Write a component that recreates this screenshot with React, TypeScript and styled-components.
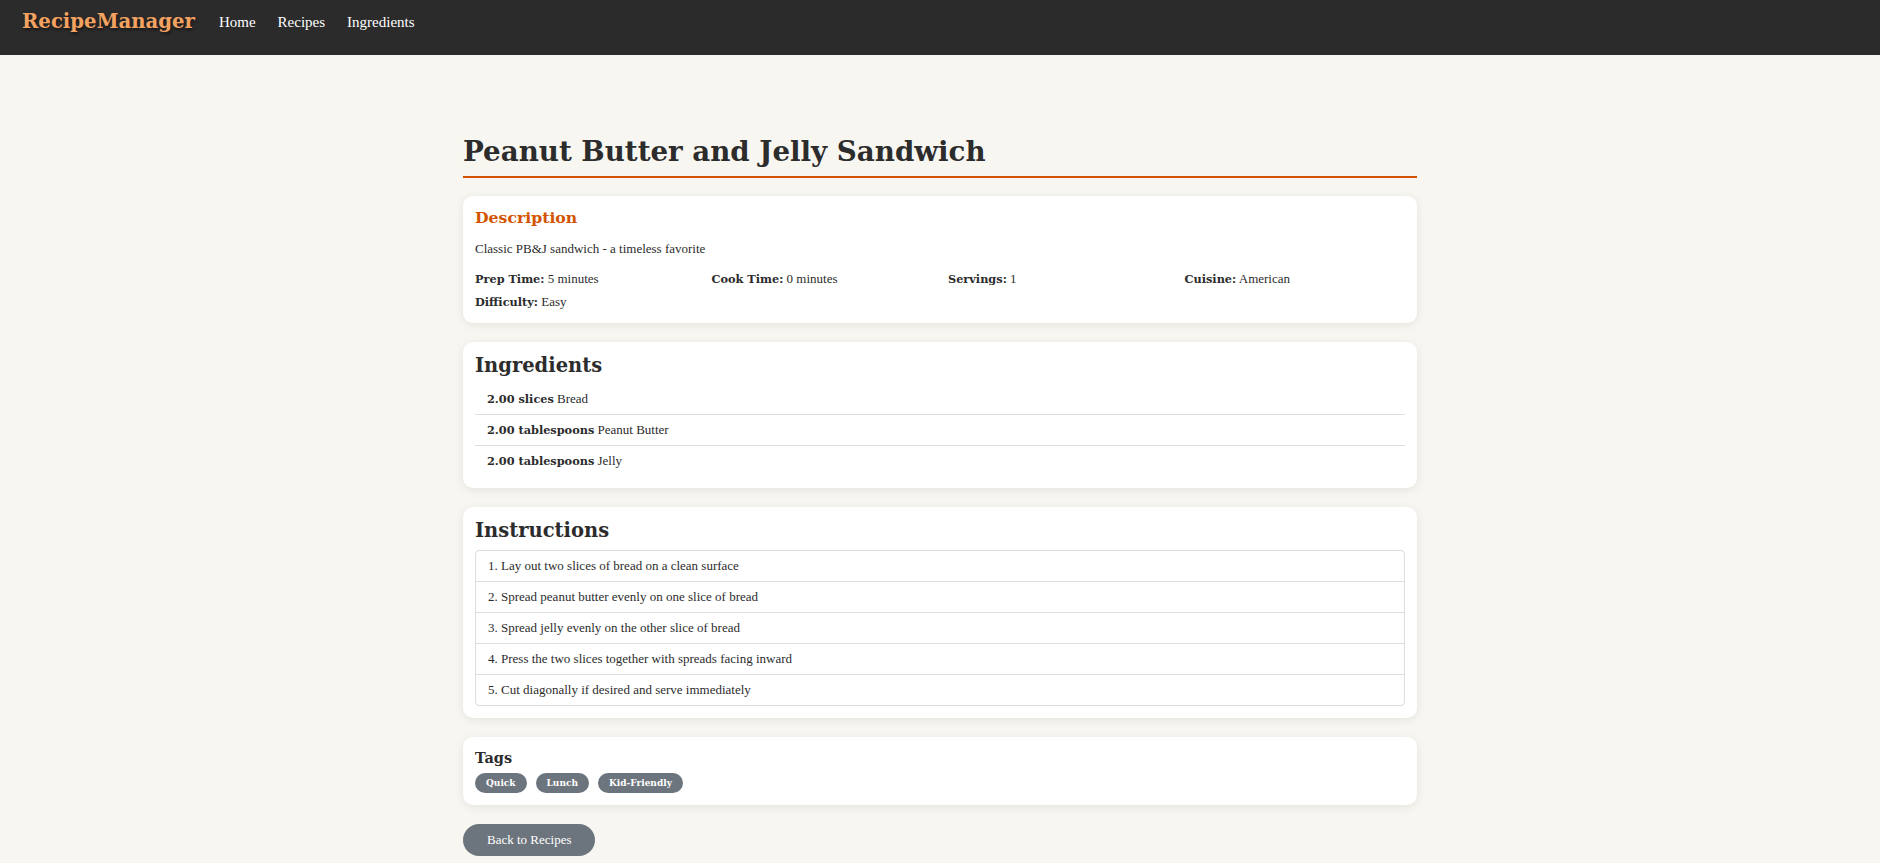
import React from "react";
import styled, { createGlobalStyle } from "styled-components";

const GlobalStyle = createGlobalStyle`
  html, body { margin: 0; padding: 0; }
  body {
    background: #f8f6f1;
    color: #2c2c2c;
    font-family: "Liberation Serif", "DejaVu Serif", serif;
  }
  * { box-sizing: border-box; }
`;

const headingFont = `"DejaVu Serif", "Liberation Serif", serif`;

const Nav = styled.nav`
  height: 55px;
  background: #2b2b2b;
  display: flex;
  align-items: flex-start;
  padding: 10px 22px 0;
  gap: 24px;
`;

const Logo = styled.a`
  font-family: ${headingFont};
  font-size: 19.7px;
  line-height: 24px;
  font-weight: bold;
  color: #f4a261;
  text-decoration: none;
  text-shadow: 1px 2px 3px rgba(0, 0, 0, 0.5);
`;

const NavLinks = styled.div`
  display: flex;
  gap: 22px;
  margin-top: 3px;
`;

const NavLink = styled.a`
  font-size: 15px;
  line-height: 18px;
  color: #ffffff;
  text-decoration: none;
`;

const Main = styled.main`
  width: 954px;
  margin: 0 auto;
  padding-top: 79px;
`;

const Title = styled.h1`
  font-family: ${headingFont};
  font-size: 27.7px;
  line-height: 36px;
  font-weight: bold;
  margin: 0 0 18px;
  padding-bottom: 6px;
  border-bottom: 2px solid #d35400;
  color: #2c2c2c;
`;

const Card = styled.section`
  background: #ffffff;
  border-radius: 10px;
  padding: 12px;
  margin-bottom: 19px;
  box-shadow: 0 2px 10px rgba(0, 0, 0, 0.08);
`;

const SubHeading = styled.h3`
  font-family: ${headingFont};
  font-size: 15.7px;
  line-height: 20px;
  font-weight: bold;
  color: #d35400;
  margin: 0 0 12px;
`;

const Text = styled.p`
  font-size: 13px;
  line-height: 18px;
  margin: 0 0 12px;
`;

const Label = styled.strong`
  font-family: ${headingFont};
  font-size: 11.3px;
  line-height: 1;
  font-weight: bold;
`;

const MetaGrid = styled.div`
  display: grid;
  grid-template-columns: repeat(auto-fit, minmax(200px, 1fr));
  gap: 5px 16px;
`;

const MetaItem = styled.div`
  font-size: 13px;
  line-height: 18px;
`;

const SectionTitle = styled.h2<{ $mb: number }>`
  font-family: ${headingFont};
  font-size: 19.5px;
  line-height: 24px;
  font-weight: bold;
  margin: 0 0 ${(p) => p.$mb}px;
  color: #2c2c2c;
`;

const IngredientList = styled.ul`
  list-style: none;
  margin: 0;
  padding: 0;
`;

const IngredientRow = styled.li`
  font-size: 13px;
  line-height: 18px;
  padding: 6px 12px;
  border-bottom: 1px solid #dedede;
  &:last-child { border-bottom: none; }
`;

const StepList = styled.ol`
  list-style: none;
  margin: 0;
  padding: 0;
  border: 1px solid #dedede;
  border-radius: 4px;
`;

const StepRow = styled.li`
  font-size: 13px;
  line-height: 18px;
  padding: 6px 12px;
  border-bottom: 1px solid #dedede;
  &:last-child { border-bottom: none; }
`;

const TagsTitle = styled.h4`
  font-family: ${headingFont};
  font-size: 14.5px;
  line-height: 18px;
  font-weight: bold;
  margin: 0 0 6px;
`;

const TagRow = styled.div`
  display: flex;
  gap: 9px;
`;

const Tag = styled.span`
  font-family: ${headingFont};
  background: #6c757d;
  color: #ffffff;
  font-size: 9px;
  font-weight: bold;
  line-height: 14px;
  padding: 3px 11px;
  border-radius: 12px;
`;

const BackButton = styled.button`
  background: #6c757d;
  color: #ffffff;
  border: none;
  border-radius: 16px;
  font-family: inherit;
  font-size: 13px;
  line-height: 18px;
  padding: 7px 24px;
  cursor: pointer;
`;

const meta: [string, string][] = [
  ["Prep Time:", "5 minutes"],
  ["Cook Time:", "0 minutes"],
  ["Servings:", "1"],
  ["Cuisine:", "American"],
  ["Difficulty:", "Easy"],
];

const ingredients: [string, string][] = [
  ["2.00 slices", "Bread"],
  ["2.00 tablespoons", "Peanut Butter"],
  ["2.00 tablespoons", "Jelly"],
];

const steps = [
  "Lay out two slices of bread on a clean surface",
  "Spread peanut butter evenly on one slice of bread",
  "Spread jelly evenly on the other slice of bread",
  "Press the two slices together with spreads facing inward",
  "Cut diagonally if desired and serve immediately",
];

const tags = ["Quick", "Lunch", "Kid-Friendly"];

export default function App() {
  return (
    <>
      <GlobalStyle />
      <Nav>
        <Logo href="#">RecipeManager</Logo>
        <NavLinks>
          <NavLink href="#">Home</NavLink>
          <NavLink href="#">Recipes</NavLink>
          <NavLink href="#">Ingredients</NavLink>
        </NavLinks>
      </Nav>
      <Main>
        <Title>Peanut Butter and Jelly Sandwich</Title>
        <Card>
          <SubHeading>Description</SubHeading>
          <Text>Classic PB&amp;J sandwich - a timeless favorite</Text>
          <MetaGrid>
            {meta.map(([k, v]) => (
              <MetaItem key={k}>
                <Label>{k}</Label> {v}
              </MetaItem>
            ))}
          </MetaGrid>
        </Card>
        <Card>
          <SectionTitle $mb={6}>Ingredients</SectionTitle>
          <IngredientList>
            {ingredients.map(([q, n]) => (
              <IngredientRow key={q + n}>
                <Label>{q}</Label> {n}
              </IngredientRow>
            ))}
          </IngredientList>
        </Card>
        <Card>
          <SectionTitle $mb={7}>Instructions</SectionTitle>
          <StepList>
            {steps.map((s, i) => (
              <StepRow key={i}>
                {i + 1}. {s}
              </StepRow>
            ))}
          </StepList>
        </Card>
        <Card>
          <TagsTitle>Tags</TagsTitle>
          <TagRow>
            {tags.map((t) => (
              <Tag key={t}>{t}</Tag>
            ))}
          </TagRow>
        </Card>
        <BackButton>Back to Recipes</BackButton>
      </Main>
    </>
  );
}
